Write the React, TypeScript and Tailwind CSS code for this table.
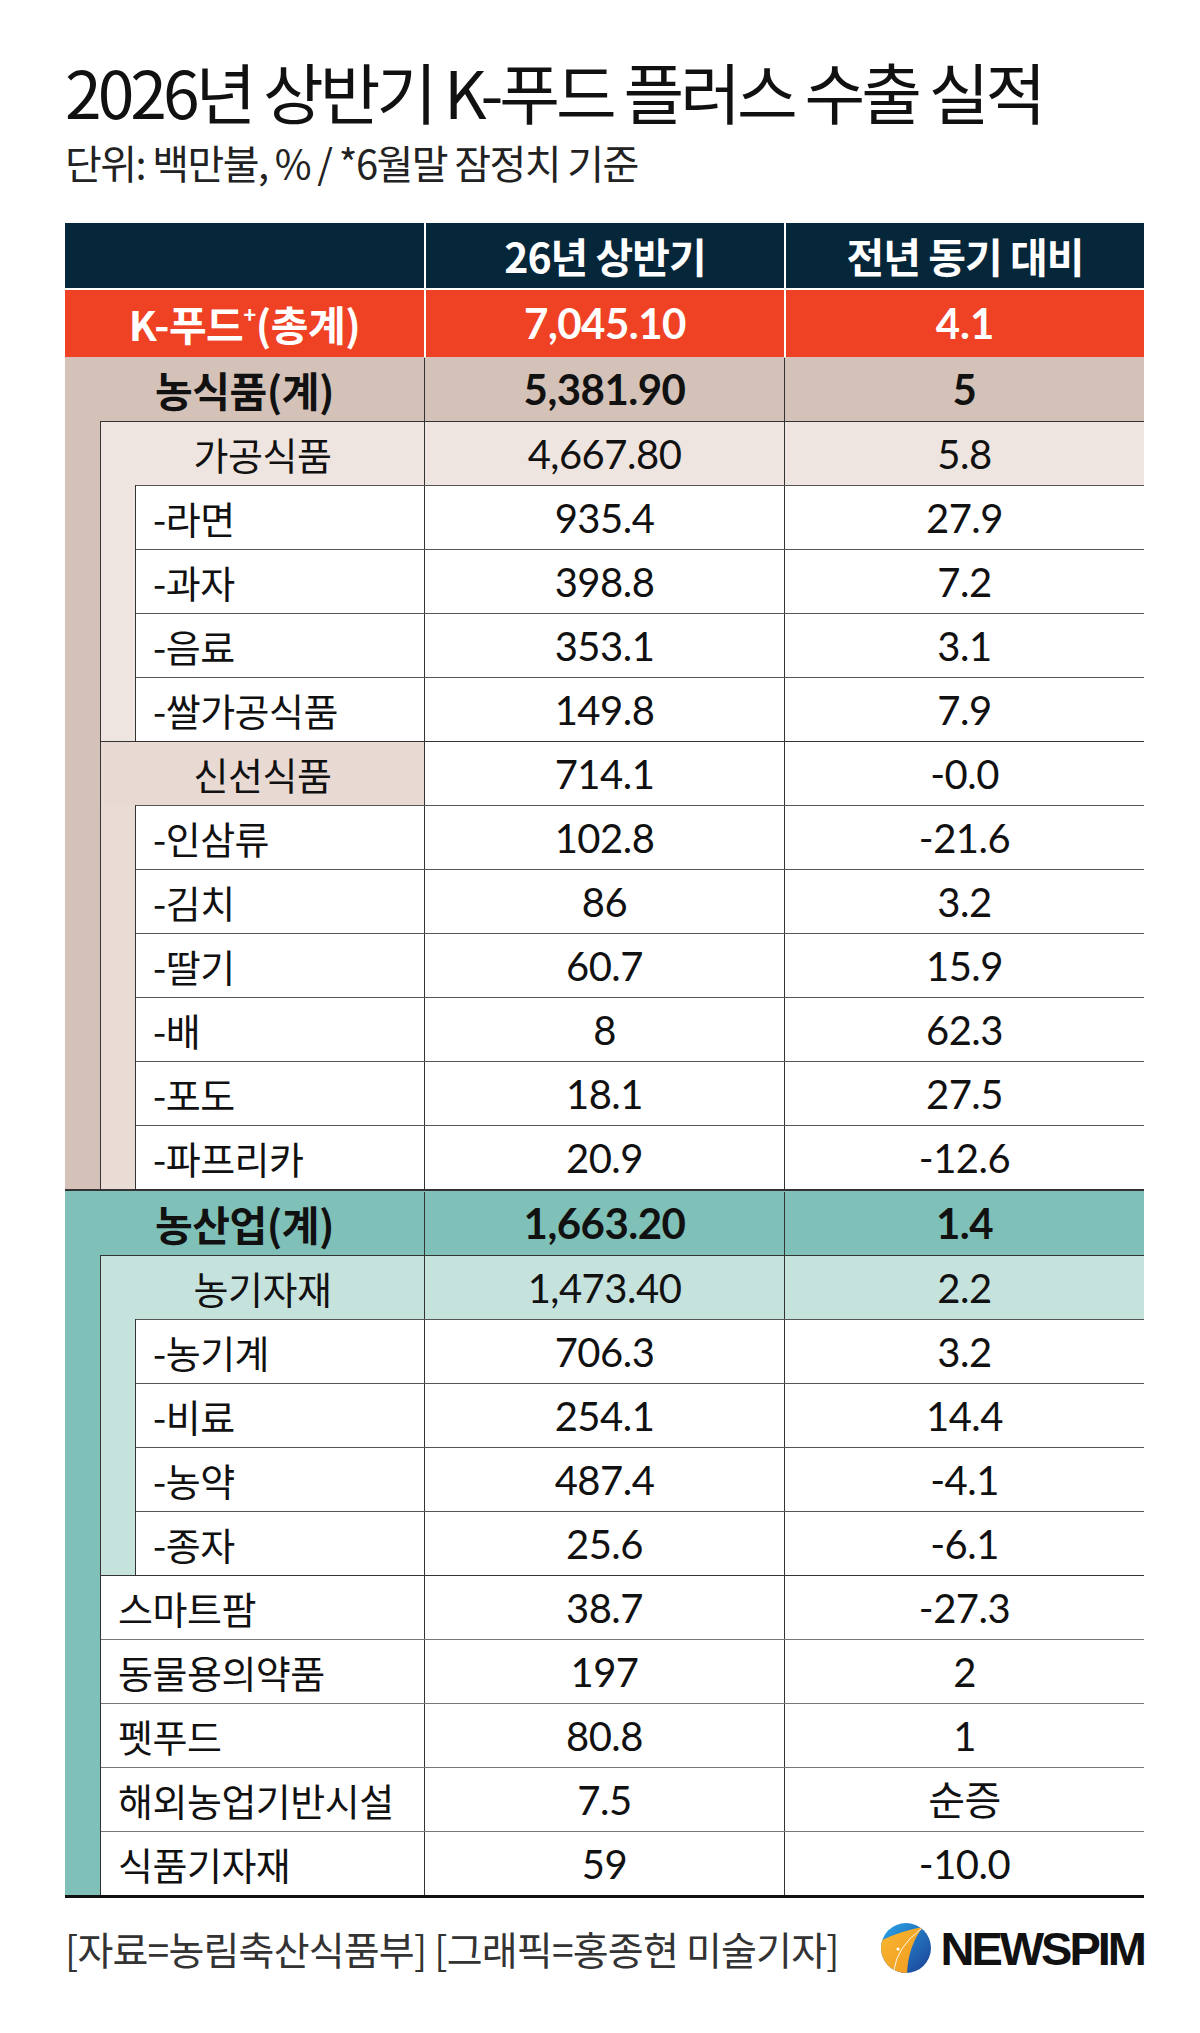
import clsx from "clsx";

const KO = "font-['Noto_Sans_CJK_KR',sans-serif]";
const NUM = "font-['Lato','Noto_Sans_CJK_KR',sans-serif]";

type Item = { label: string; a: string; b: string };

const food = {
  total: { label: "농식품(계)", a: "5,381.90", b: "5" },
  groups: [
    {
      head: { label: "가공식품", a: "4,667.80", b: "5.8" },
      full: true,
      rail: "bg-[#efe5e0]",
      headBg: "bg-[#efe5e0]",
      items: [
        { label: "-라면", a: "935.4", b: "27.9" },
        { label: "-과자", a: "398.8", b: "7.2" },
        { label: "-음료", a: "353.1", b: "3.1" },
        { label: "-쌀가공식품", a: "149.8", b: "7.9" },
      ],
    },
    {
      head: { label: "신선식품", a: "714.1", b: "-0.0" },
      full: false,
      rail: "bg-[#e9dcd5]",
      headBg: "bg-[#e8d9d2]",
      items: [
        { label: "-인삼류", a: "102.8", b: "-21.6" },
        { label: "-김치", a: "86", b: "3.2" },
        { label: "-딸기", a: "60.7", b: "15.9" },
        { label: "-배", a: "8", b: "62.3" },
        { label: "-포도", a: "18.1", b: "27.5" },
        { label: "-파프리카", a: "20.9", b: "-12.6" },
      ],
    },
  ],
};

const farm = {
  total: { label: "농산업(계)", a: "1,663.20", b: "1.4" },
  head: { label: "농기자재", a: "1,473.40", b: "2.2" },
  items: [
    { label: "-농기계", a: "706.3", b: "3.2" },
    { label: "-비료", a: "254.1", b: "14.4" },
    { label: "-농약", a: "487.4", b: "-4.1" },
    { label: "-종자", a: "25.6", b: "-6.1" },
  ],
  flat: [
    { label: "스마트팜", a: "38.7", b: "-27.3" },
    { label: "동물용의약품", a: "197", b: "2" },
    { label: "펫푸드", a: "80.8", b: "1" },
    { label: "해외농업기반시설", a: "7.5", b: "순증" },
    { label: "식품기자재", a: "59", b: "-10.0" },
  ],
};

function Row({
  item,
  center,
  bold,
  rowBg,
  firstBg,
  line,
}: {
  item: Item;
  center?: boolean;
  bold?: boolean;
  rowBg?: string;
  firstBg?: string;
  line: string;
}) {
  return (
    <div className={clsx("grid grid-cols-[1fr_360px_360px] h-[64px] border-t text-[#111]", line, rowBg)}>
      <div
        className={clsx(
          "flex items-center",
          KO,
          center ? "justify-center" : "pl-[17px]",
          bold ? "text-[41px] font-bold tracking-[-0.5px]" : "text-[38px] tracking-[-0.5px]",
          firstBg
        )}
      >
        {item.label}
      </div>
      {[item.a, item.b].map((v, i) => (
        <div
          key={i}
          className={clsx(
            "flex items-center justify-center border-l border-[#333]",
            NUM,
            bold ? "text-[42px] font-bold tracking-[-0.5px]" : "text-[40px] tracking-[-0.5px]"
          )}
        >
          {v}
        </div>
      ))}
    </div>
  );
}

function Logo() {
  return (
    <svg width="52" height="52" viewBox="0 0 52 52">
      <defs>
        <linearGradient id="lb" x1="0" y1="0" x2="1" y2="1">
          <stop offset="0" stopColor="#2aa6e8" />
          <stop offset="1" stopColor="#1c3f94" />
        </linearGradient>
        <linearGradient id="lo" x1="0" y1="0" x2="1" y2="1">
          <stop offset="0" stopColor="#f7b731" />
          <stop offset="1" stopColor="#f19a1f" />
        </linearGradient>
        <clipPath id="lc">
          <circle cx="26" cy="26" r="25" />
        </clipPath>
      </defs>
      <circle cx="26" cy="26" r="25" fill="url(#lb)" />
      <g clipPath="url(#lc)">
        <path d="M0 19 Q20 9 43 5 Q28 24 27 52 L0 52 Z" fill="url(#lo)" />
        <path d="M14 48 Q17 25 41 7" stroke="#fff" strokeWidth="0.9" fill="none" />
        <circle cx="18" cy="27" r="1.6" fill="#fff" />
      </g>
    </svg>
  );
}

export default function App() {
  return (
    <div className="w-[1200px] h-[2033px] bg-white overflow-hidden">
      <div className="ml-[65px] w-[1079px] pt-[50px]">
        <h1 className={clsx(KO, "text-[66px] leading-[80px] font-normal tracking-[-4px] text-[#111] whitespace-nowrap")}>
          2026년 상반기 K-푸드 플러스 수출 실적
        </h1>
        <p className={clsx(KO, "text-[40px] leading-[50px] text-[#222] tracking-[-1.6px] mt-[7px] whitespace-nowrap")}>
          단위: 백만불, % / *6월말 잠정치 기준
        </p>

        <div className="mt-[36px] border-b-[3px] border-[#111]">
          {/* header */}
          <div className="grid grid-cols-[1fr_360px_360px] h-[67px] bg-[#06263a] border-b-2 border-white text-white">
            <div />
            <div className={clsx(KO, "flex items-center justify-center border-l-2 border-white text-[41px] font-bold tracking-[-1px]")}>
              26년 상반기
            </div>
            <div className={clsx(KO, "flex items-center justify-center border-l-2 border-white text-[41px] font-bold tracking-[-1px]")}>
              전년 동기 대비
            </div>
          </div>

          {/* total */}
          <div className="grid grid-cols-[1fr_360px_360px] h-[67px] bg-[#ef4224] text-white">
            <div className={clsx(KO, "flex items-center justify-center text-[41px] font-bold tracking-[-0.5px]")}>
              K-푸드<sup className="text-[22px]">+</sup>(총계)
            </div>
            <div className={clsx(NUM, "flex items-center justify-center border-l-2 border-white text-[42px] font-bold tracking-[-0.5px]")}>
              7,045.10
            </div>
            <div className={clsx(NUM, "flex items-center justify-center border-l-2 border-white text-[42px] font-bold")}>
              4.1
            </div>
          </div>

          {/* 농식품 */}
          <Row item={food.total} center bold rowBg="bg-[#d4c2b8]" line="border-transparent" />
          <div className="flex bg-[#d4c2b8]">
            <div className="w-[35px] shrink-0" />
            <div className="flex-1 border-l border-[#333] bg-white">
              {food.groups.map((g) => (
                <div key={g.head.label}>
                  <Row
                    item={g.head}
                    center
                    rowBg={g.full ? g.headBg : undefined}
                    firstBg={g.full ? undefined : g.headBg}
                    line="border-[#333]"
                  />
                  <div className={clsx("flex", g.rail)}>
                    <div className="w-[34px] shrink-0" />
                    <div className="flex-1 border-l border-[#333] bg-white">
                      {g.items.map((it) => (
                        <Row key={it.label} item={it} line="border-[#555]" />
                      ))}
                    </div>
                  </div>
                </div>
              ))}
            </div>
          </div>

          {/* 농산업 */}
          <div className="border-t-2 border-[#333]">
            <Row item={farm.total} center bold rowBg="bg-[#7fc1b8]" line="border-transparent" />
          </div>
          <div className="flex bg-[#7fc1b8]">
            <div className="w-[35px] shrink-0" />
            <div className="flex-1 border-l border-[#333] bg-white">
              <Row item={farm.head} center rowBg="bg-[#c6e2dd]" line="border-[#333]" />
              <div className="flex bg-[#c6e2dd]">
                <div className="w-[34px] shrink-0" />
                <div className="flex-1 border-l border-[#333] bg-white">
                  {farm.items.map((it) => (
                    <Row key={it.label} item={it} line="border-[#555]" />
                  ))}
                </div>
              </div>
              {farm.flat.map((it, i) => (
                <Row key={it.label} item={it} line={i === 0 ? "border-[#333]" : "border-[#777]"} />
              ))}
            </div>
          </div>
        </div>

        {/* footer */}
        <div className="flex items-center justify-between mt-[24px]">
          <div className={clsx(KO, "text-[39px] leading-[50px] text-[#333] tracking-[-0.8px] whitespace-nowrap")}>
            [자료=농림축산식품부] [그래픽=홍종현 미술기자]
          </div>
          <div className="flex items-center gap-[8px]">
            <Logo />
            <span className="font-['Liberation_Sans',Arial,sans-serif] font-bold text-[47px] leading-none tracking-[-3px] text-[#111]">
              NEWSPIM
            </span>
          </div>
        </div>
      </div>
    </div>
  );
}
